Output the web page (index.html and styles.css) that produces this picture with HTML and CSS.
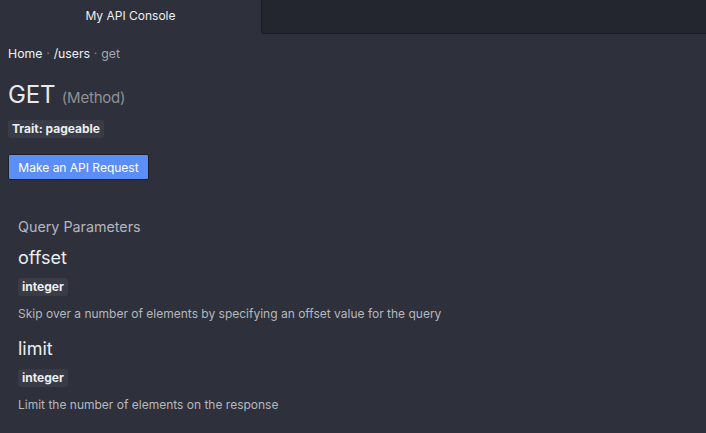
FILE: index.html
```html
<!DOCTYPE html>
<html>
<head>
<meta charset="utf-8">
<link rel="stylesheet" href="styles.css">
</head>
<body>
<div class="tabs">
  <div class="tab active">My API Console</div>
  <div class="tab-rest"></div>
</div>
<main class="content">
  <nav class="crumbs"><span class="crumb">Home</span><span class="sep">·</span><span class="crumb">/users</span><span class="sep">·</span><span class="crumb current">get</span></nav>
  <h1 class="method">GET <span class="method-label">(Method)</span></h1>
  <div class="traits"><span class="badge">Trait: pageable</span></div>
  <button class="request-btn">Make an API Request</button>
  <section class="params">
    <h2 class="params-title">Query Parameters</h2>
    <div class="param">
      <h3 class="param-name">offset</h3>
      <span class="badge">integer</span>
      <p class="param-desc">Skip over a number of elements by specifying an offset value for the query</p>
    </div>
    <div class="param">
      <h3 class="param-name">limit</h3>
      <span class="badge">integer</span>
      <p class="param-desc">Limit the number of elements on the response</p>
    </div>
  </section>
</main>
</body>
</html>
```
FILE: styles.css
```css
* { box-sizing: border-box; }
html, body {
  margin: 0;
  padding: 0;
  background: #2e313b;
  color: #e6e7ea;
  font-family: Inter, "Noto Sans", sans-serif;
  height: 100%;
  overflow: hidden;
}
.tabs {
  display: flex;
  height: 34px;
  background: #2e313b;
}
.tab {
  width: 261px;
  display: flex;
  align-items: center;
  justify-content: center;
  font-size: 12px;
  color: #eceef1;
  padding-bottom: 3px;
}
.tab-rest {
  flex: 1;
  background: #23262f;
  border-left: 1px solid #1a1c22;
  border-bottom: 1px solid #1a1c22;
  border-bottom-left-radius: 3px;
}
.content {
  padding: 10px 8px 0 8px;
}
.crumbs {
  font-size: 12.3px;
  display: flex;
  gap: 4px;
  align-items: center;
  height: 18px;
}
.crumb { color: #eef0f3; }
.sep { color: #8e919a; font-size: 11px; }
.crumb.current { color: #a4a7ae; }
.method {
  margin: 18px 0 0 0;
  font-size: 24px;
  font-weight: 400;
  color: #e8e9ec;
  line-height: 30px;
  letter-spacing: -0.2px;
}
.method-label {
  font-size: 15px;
  color: #8d9098;
}
.traits { margin-top: 4px; }
.badge {
  display: inline-block;
  background: #393c46;
  color: #eceef1;
  font-weight: 700;
  font-size: 12px;
  line-height: 18px;
  padding: 0 4px;
  border-radius: 3px;
}
.request-btn {
  display: block;
  margin-top: 16px;
  height: 26px;
  width: 141px;
  background: #5b8ff7;
  color: #fff;
  border: 1px solid #1e2027;
  border-radius: 2px;
  font-family: inherit;
  font-size: 12px;
  padding: 0;
}
.params {
  padding: 0 10px;
  margin-top: 37px;
}
.params-title {
  margin: 0;
  font-size: 14.3px;
  font-weight: 400;
  color: #b3b6bd;
  line-height: 20px;
}
.param-name {
  margin: 9px 0 5px;
  font-size: 18px;
  font-weight: 400;
  color: #eceef1;
  line-height: 24px;
}
.param-desc {
  margin: 9px 0 0;
  font-size: 12px;
  color: #b5b8be;
  line-height: 18px;
}
.param + .param .param-name { margin-top: 14px; }
```
